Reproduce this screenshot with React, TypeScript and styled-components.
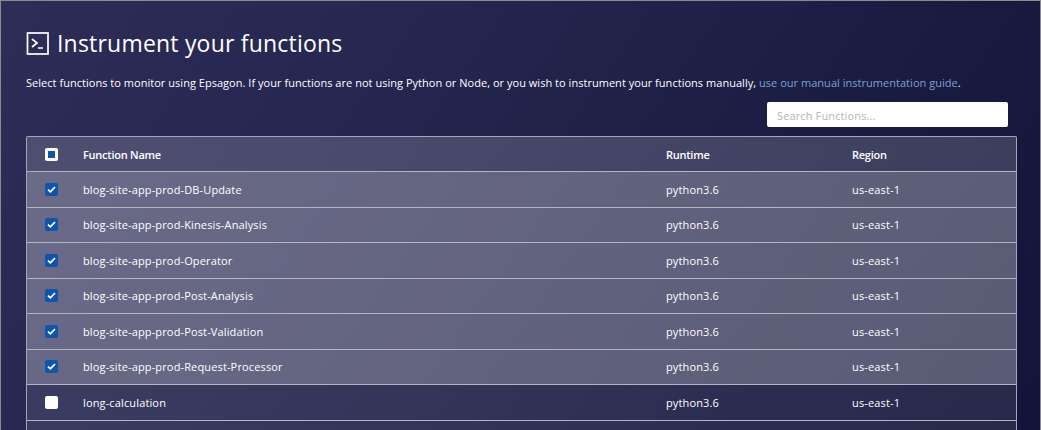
import styled, { createGlobalStyle } from "styled-components";

const GlobalStyle = createGlobalStyle`
  html, body {
    margin: 0;
    padding: 0;
    background: #14163a;
  }
  * {
    box-sizing: border-box;
  }
`;

const Page = styled("div")`
  width: 1041px;
  height: 430px;
  overflow: hidden;
  padding: 28px 24px 0 25px;
  border: 1px solid #8c8c86;
  border-bottom: 0;
  background: linear-gradient(125deg, #2d2d57 0%, #25264f 35%, #181a40 75%, #12143a 100%);
  font-family: "Open Sans", "Liberation Sans", sans-serif;
  color: #fff;
`;

const Heading = styled("h1")`
  display: flex;
  align-items: center;
  gap: 8px;
  margin: 0;
  height: 28px;
  font-size: 23px;
  font-weight: 400;
  letter-spacing: 0.2px;
`;

const Intro = styled("p")`
  margin: 18px 0 0;
  font-size: 11px;
  font-weight: 500;
  line-height: 16px;
  letter-spacing: 0.03px;
`;

const GuideLink = styled("a")`
  color: #7ba3cf;
`;

const SearchRow = styled("div")`
  display: flex;
  justify-content: flex-end;
  margin-top: 11px;
  padding-right: 8px;
`;

const SearchInput = styled("input")`
  width: 241px;
  height: 25px;
  padding: 1px 10px 0;
  border: 0;
  border-radius: 2px;
  background: #fff;
  font-family: inherit;
  font-size: 11px;
  letter-spacing: 0.13px;

  &::placeholder {
    color: #b4b4b8;
  }
`;

const Table = styled("div")`
  width: 991px;
  margin-top: 9px;
  border: 1px solid #a5a5b4;
  border-bottom: 0;
  border-radius: 2px 2px 0 0;
`;

const Row = styled("div")<{ $tone: "header" | "light" | "dark" }>`
  display: grid;
  grid-template-columns: 56px 583px 186px 1fr;
  align-items: center;
  height: ${({ $tone }) => ($tone === "header" ? "35px" : "35.5px")};
  border-bottom: 1px solid #b4b4c2;
  font-size: 11px;
  letter-spacing: ${({ $tone }) => ($tone === "header" ? "-0.25px" : "0.14px")};
  font-weight: ${({ $tone }) => ($tone === "header" ? 600 : 500)};
  background: ${({ $tone }) =>
    $tone === "header"
      ? "rgba(255, 255, 255, 0.17)"
      : $tone === "light"
        ? "rgba(255, 255, 255, 0.3)"
        : "rgba(255, 255, 255, 0.09)"};
`;

const CheckCell = styled("div")`
  display: flex;
  justify-content: center;
  padding-right: 7px;
`;

const Box = styled("span")<{ $state: "checked" | "empty" | "partial" }>`
  display: flex;
  align-items: center;
  justify-content: center;
  width: 13px;
  height: 13px;
  border-radius: 2px;
  background: ${({ $state }) => ($state === "checked" ? "#0f55a8" : "#fff")};
`;

const PartialMark = styled("span")`
  width: 7px;
  height: 7px;
  background: #0f55a8;
`;

const TerminalIcon = () => (
  <svg width="23" height="23" viewBox="0 0 23 23" fill="none" stroke="#fff" strokeWidth="1.7">
    <rect x="1.5" y="1" width="20.5" height="21" />
    <path d="M6 7l5 4-5 4M12 16h5" />
  </svg>
);

const CheckIcon = () => (
  <svg width="9" height="9" viewBox="0 0 9 9" fill="none" stroke="#fff" strokeWidth="1.8">
    <path d="M1 4.6l2.4 2.2L8 2" />
  </svg>
);

const functions = [
  { name: "blog-site-app-prod-DB-Update", checked: true },
  { name: "blog-site-app-prod-Kinesis-Analysis", checked: true },
  { name: "blog-site-app-prod-Operator", checked: true },
  { name: "blog-site-app-prod-Post-Analysis", checked: true },
  { name: "blog-site-app-prod-Post-Validation", checked: true },
  { name: "blog-site-app-prod-Request-Processor", checked: true },
  { name: "long-calculation", checked: false },
];

export default function App() {
  return (
    <>
      <GlobalStyle />
      <Page>
        <Heading>
          <TerminalIcon />
          Instrument your functions
        </Heading>
        <Intro>
          Select functions to monitor using Epsagon. If your functions are not using Python or Node, or you wish to
          instrument your functions manually, <GuideLink>use our manual instrumentation guide</GuideLink>.
        </Intro>
        <SearchRow>
          <SearchInput placeholder="Search Functions..." />
        </SearchRow>
        <Table>
          <Row $tone="header">
            <CheckCell>
              <Box $state="partial">
                <PartialMark />
              </Box>
            </CheckCell>
            <div>Function Name</div>
            <div>Runtime</div>
            <div>Region</div>
          </Row>
          {functions.map((fn) => (
            <Row key={fn.name} $tone={fn.checked ? "light" : "dark"}>
              <CheckCell>
                <Box $state={fn.checked ? "checked" : "empty"}>{fn.checked && <CheckIcon />}</Box>
              </CheckCell>
              <div>{fn.name}</div>
              <div>python3.6</div>
              <div>us-east-1</div>
            </Row>
          ))}
          <Row $tone="dark" />
        </Table>
      </Page>
    </>
  );
}
